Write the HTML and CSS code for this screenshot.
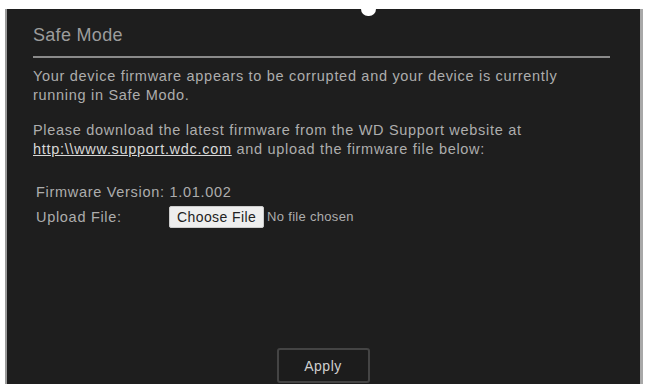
FILE: index.html
```html
<!DOCTYPE html>
<html lang="en">
<head>
    <meta charset="UTF-8">
    <meta name="viewport" content="width=device-width, initial-scale=1.0">
    <title>Safe Mode</title>
    <link rel="stylesheet" href="styles.css">
</head>
<body>
    <div class="panel">
        <div class="notch"></div>
        <h1 class="title">Safe Mode</h1>
        <div class="content">
            <p>Your device firmware appears to be corrupted and your device is currently running in Safe Modo.</p>
            <p>Please download the latest firmware from the WD Support website at <a href="#" class="link">http:\\www.support.wdc.com</a> and upload the firmware file below:</p>
            <div class="form">
                <div class="row">Firmware Version: 1.01.002</div>
                <div class="row">
                    <span class="label">Upload File:</span>
                    <span class="file-button">Choose File</span>
                    <span class="file-name">No file chosen</span>
                </div>
            </div>
        </div>
        <div class="actions">
            <button class="apply-button">Apply</button>
        </div>
    </div>
</body>
</html>
```

FILE: styles.css
```css
body {
    margin: 0;
    background-color: #ffffff;
    font-family: "Liberation Sans", Arial, sans-serif;
    height: 384px;
    overflow: hidden;
}

.panel {
    position: relative;
    box-sizing: border-box;
    margin: 9px 0 0 5px;
    width: 638px;
    height: 375px;
    background-color: #1e1e1e;
    border-left: 2px solid #9a9a9a;
    border-right: 3px solid #a8a8a8;
    display: flex;
    flex-direction: column;
    padding: 0 30px 0 26px;
}

.notch {
    position: absolute;
    top: 0;
    left: 354px;
    width: 15px;
    height: 7px;
    background-color: #ffffff;
    border-radius: 0 0 8px 8px;
}

.title {
    margin: 0;
    padding: 16px 0 10px 0;
    font-size: 18px;
    font-weight: normal;
    letter-spacing: 0.3px;
    color: #9c9c9c;
    border-bottom: 2px solid #8a8a8a;
}

.content {
    flex: 1;
    font-size: 14.5px;
    letter-spacing: 0.7px;
    color: #adadad;
}

.content p {
    max-width: 570px;
    margin: 9px 0 17px 0;
    line-height: 18.5px;
}

.link {
    color: #d8d8d8;
}

.form {
    padding-left: 3px;
    margin-top: 21px;
}

.row {
    display: flex;
    align-items: center;
    height: 25px;
}

.label {
    width: 133px;
}

.file-button {
    background-color: #eeeeee;
    color: #222222;
    padding: 2px 7px;
    border: 1px solid #cccccc;
    border-radius: 2px;
    font-size: 14px;
    letter-spacing: 0.4px;
}

.file-name {
    margin-left: 3px;
    font-size: 13px;
    letter-spacing: 0.3px;
}

.actions {
    display: flex;
    justify-content: center;
    padding-bottom: 1px;
}

.apply-button {
    margin-left: 3px;
    width: 93px;
    height: 35px;
    background-color: #1c1c1c;
    border: 2px solid #444444;
    border-radius: 3px;
    color: #cfcfcf;
    font-family: "Liberation Sans", Arial, sans-serif;
    font-size: 14px;
    letter-spacing: 0.5px;
}
```
